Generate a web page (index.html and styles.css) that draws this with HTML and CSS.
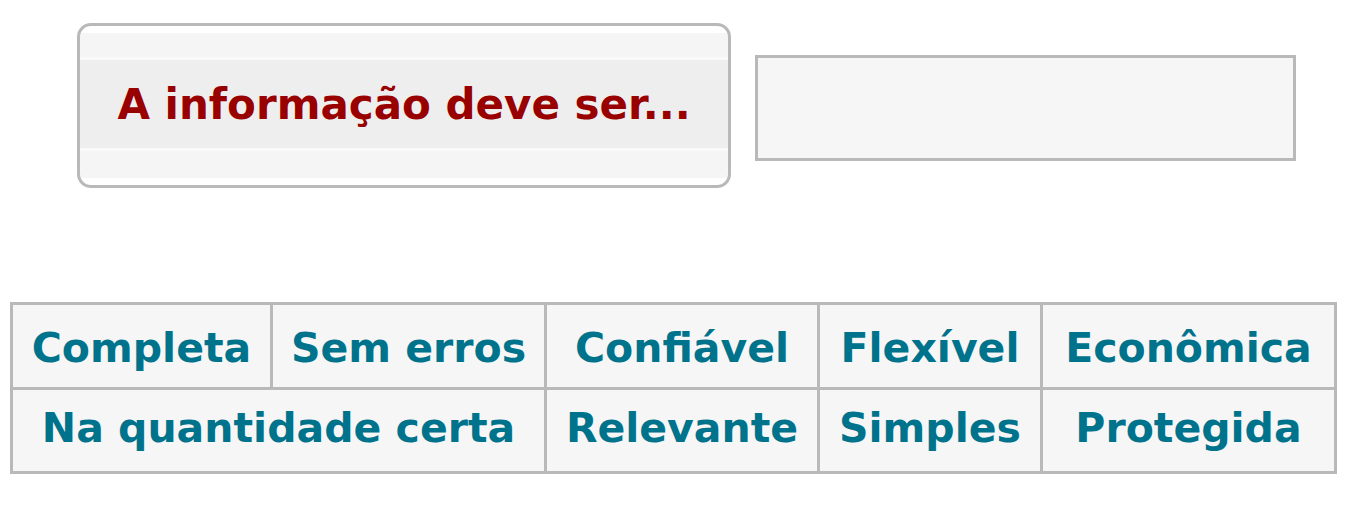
FILE: index.html
```html
<!DOCTYPE html>
<html lang="pt">
<head>
<meta charset="utf-8">
<title>A informação deve ser...</title>
<link rel="stylesheet" href="styles.css">
</head>
<body>
<div class="top">
  <div class="title-box"><span class="title">A informação deve ser...</span></div>
  <div class="answer"></div>
</div>
<table class="options">
  <colgroup>
    <col class="c1"><col class="c2"><col class="c3"><col class="c4"><col class="c5">
  </colgroup>
  <tr>
    <td>Completa</td>
    <td>Sem erros</td>
    <td>Confiável</td>
    <td>Flexível</td>
    <td>Econômica</td>
  </tr>
  <tr>
    <td colspan="2">Na quantidade certa</td>
    <td>Relevante</td>
    <td>Simples</td>
    <td>Protegida</td>
  </tr>
</table>
</body>
</html>
```

FILE: styles.css
```css
html, body {
  margin: 0;
  padding: 0;
  background: #ffffff;
}

body {
  font-family: "DejaVu Sans", Verdana, sans-serif;
  font-weight: bold;
}

.top {
  display: flex;
  align-items: center;
  gap: 24px;
  padding: 23px 0 0 77px;
}

.title-box {
  box-sizing: border-box;
  width: 654px;
  height: 165px;
  border: 3px solid #b9b9b9;
  border-radius: 14px;
  display: flex;
  align-items: center;
  justify-content: center;
  background: linear-gradient(to bottom,
    #ffffff 0px, #ffffff 7px,
    #f5f5f5 7px, #f5f5f5 31px,
    #fafafa 31px, #fafafa 34px,
    #eeeeee 34px, #eeeeee 122px,
    #fafafa 122px, #fafafa 125px,
    #f5f5f5 125px, #f5f5f5 152px,
    #ffffff 152px, #ffffff 159px);
}

.title {
  color: #990000;
  font-size: 42px;
  line-height: 1;
  margin-top: -2px;
}

.answer {
  box-sizing: border-box;
  width: 541px;
  height: 106px;
  margin-top: 4px;
  border: 3px solid #b9b9b9;
  background: #f6f6f6;
}

.options {
  margin: 114px 0 0 10px;
  border-collapse: collapse;
  table-layout: fixed;
  width: 1324px;
  border: 3px solid #b9b9b9;
}

.options .c1 { width: 260px; }
.options .c2 { width: 274px; }
.options .c3 { width: 273px; }
.options .c4 { width: 223px; }
.options .c5 { width: 294px; }

.options td {
  border: 3px solid #b9b9b9;
  background: #f6f6f6;
  color: #00738c;
  font-size: 41px;
  text-align: center;
  height: 77.5px;
  padding: 4px 0 0 0;
  white-space: nowrap;
}

.options tr + tr td {
  padding-top: 0;
  padding-bottom: 4px;
}
```
